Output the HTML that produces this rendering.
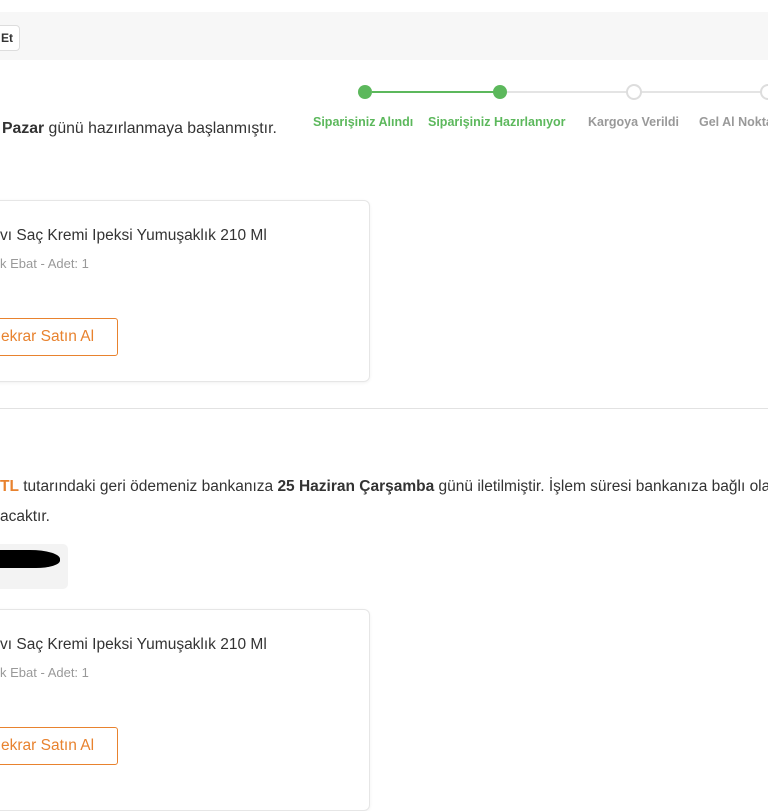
<!DOCTYPE html><html><head><style>
body{margin:0;width:768px;height:768px;overflow:hidden;background:#fff;font-family:"Liberation Sans",sans-serif;color:#333;position:relative}
.a{position:absolute;white-space:nowrap}
.card{position:absolute;left:-10px;width:378px;border:1px solid #e6e6e6;border-radius:6px;box-shadow:0 1px 3px rgba(0,0,0,.06)}
.btn{position:absolute;left:-20px;width:136px;height:36px;border:1.5px solid #e8822e;border-radius:3px;color:#e8822e;font-size:15.5px;line-height:36px;text-indent:20px}
.lbl{font-size:12.5px;top:115px;font-weight:bold}
.dot{position:absolute;width:14px;height:14px;border-radius:50%;top:85px}
</style></head><body>
<div class="a" style="left:0;top:12px;width:768px;height:48px;background:#f7f7f7"></div>
<div class="a" style="left:-10px;top:25px;width:28px;height:24px;border:1px solid #ddd;border-radius:4px;background:#fff;font-size:12px;font-weight:bold;line-height:24px;text-indent:10px">Et</div>
<div class="a" style="left:2px;top:120px;font-size:15.8px"><b>Pazar</b> günü hazırlanmaya başlanmıştır.</div>
<div class="a" style="left:372px;top:91px;width:127px;height:2px;background:#5cb85c"></div>
<div class="a" style="left:506px;top:91px;width:262px;height:2px;background:#e4e4e4"></div>
<div class="dot" style="left:358px;background:#5cb85c"></div>
<div class="dot" style="left:493px;background:#5cb85c"></div>
<div class="dot" style="left:626px;width:16px;height:16px;top:84px;box-sizing:border-box;border:2px solid #ddd;background:#fff"></div>
<div class="dot" style="left:760px;width:16px;height:16px;top:84px;box-sizing:border-box;border:2px solid #ddd;background:#fff"></div>
<div class="a lbl" style="left:313px;color:#5cb85c">Siparişiniz Alındı</div>
<div class="a lbl" style="left:428px;color:#5cb85c">Siparişiniz Hazırlanıyor</div>
<div class="a lbl" style="left:588px;color:#999">Kargoya Verildi</div>
<div class="a lbl" style="left:699px;color:#999">Gel Al Noktası</div>
<div class="card" style="top:200px;height:180px"></div>
<div class="a" style="left:0;top:227px;font-size:15.5px">vı Saç Kremi Ipeksi Yumuşaklık 210 Ml</div>
<div class="a" style="left:0;top:256px;font-size:13px;color:#999">k Ebat - Adet: 1</div>
<div class="btn" style="top:318px">ekrar Satın Al</div>
<div class="a" style="left:0;top:408px;width:768px;height:1px;background:#e2e2e2"></div>
<div class="a" style="left:0;top:478px;font-size:15.5px"><span style="color:#e8822e;font-weight:bold">TL</span> tutarındaki geri ödemeniz bankanıza <b>25 Haziran Çarşamba</b> günü iletilmiştir. İşlem süresi bankanıza bağlı olarak</div>
<div class="a" style="left:0;top:508px;font-size:15.5px">acaktır.</div>
<div class="a" style="left:-10px;top:544px;width:78px;height:45px;background:#f3f3f3;border-radius:5px"></div>
<div class="a" style="left:0;top:550px;width:60px;height:18px;background:#000;border-radius:0 50% 40% 0"></div>
<div class="card" style="top:609px;height:200px"></div>
<div class="a" style="left:0;top:636px;font-size:15.5px">vı Saç Kremi Ipeksi Yumuşaklık 210 Ml</div>
<div class="a" style="left:0;top:665px;font-size:13px;color:#999">k Ebat - Adet: 1</div>
<div class="btn" style="top:727px">ekrar Satın Al</div>
</body></html>
